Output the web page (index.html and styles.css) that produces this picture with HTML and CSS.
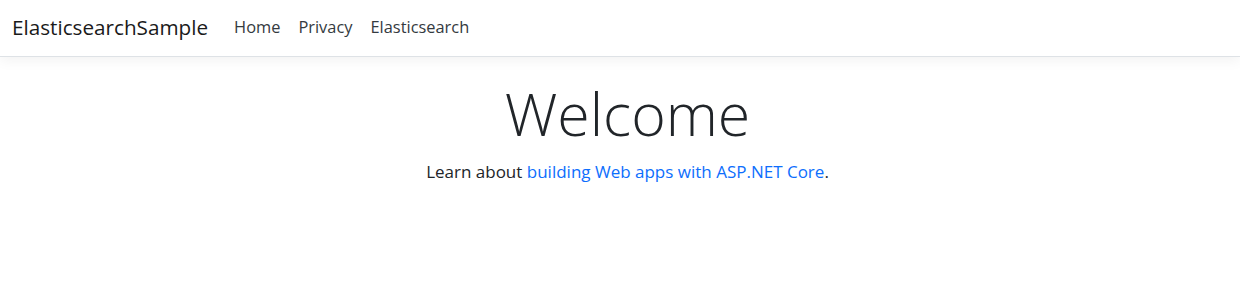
FILE: index.html
```html
<!DOCTYPE html>
<html lang="en">
<head>
  <meta charset="UTF-8">
  <meta name="viewport" content="width=device-width, initial-scale=1.0">
  <title>Home Page - ElasticsearchSample</title>
  <link rel="stylesheet" href="styles.css">
</head>
<body>

  <header class="navbar">
    <a class="navbar-brand" href="#">ElasticsearchSample</a>
    <ul class="nav-links">
      <li><a class="nav-link" href="#">Home</a></li>
      <li><a class="nav-link" href="#">Privacy</a></li>
      <li><a class="nav-link" href="#">Elasticsearch</a></li>
    </ul>
  </header>

  <main class="content">
    <h1 class="display">Welcome</h1>
    <p class="lead-text">Learn about <a href="#">building Web apps with ASP.NET Core</a>.</p>
  </main>

</body>
</html>
```

FILE: styles.css
```css
body {
  font-family: 'Open Sans', 'Noto Sans', sans-serif;
  margin: 0;
  padding: 0;
  color: #212529;
  background: #ffffff;
}

a {
  text-decoration: none;
}

.navbar {
  display: flex;
  align-items: center;
  height: 56px;
  padding: 0 12px 3px;
  box-sizing: border-box;
  height: 57px;
  background: #ffffff;
  border-bottom: 1px solid #dee2e6;
  box-shadow: 0 4px 12px rgba(0, 0, 0, 0.05);
}

.navbar-brand {
  font-size: 20.7px;
  color: #1a1a1a;
  margin-right: 17px;
}

.nav-links {
  display: flex;
  list-style: none;
  margin: 0;
  padding: 0;
}

.nav-link {
  display: block;
  padding: 8px 9px;
  font-size: 16.4px;
  color: #343a40;
}

.content {
  text-align: center;
  padding: 21px 0 0 15px;
}

.display {
  font-size: 59px;
  font-weight: 300;
  line-height: 1.2;
  margin: 0 0 11px;
}

.lead-text {
  font-size: 17px;
  margin: 0;
}

.lead-text a {
  color: #0d6efd;
}
```
